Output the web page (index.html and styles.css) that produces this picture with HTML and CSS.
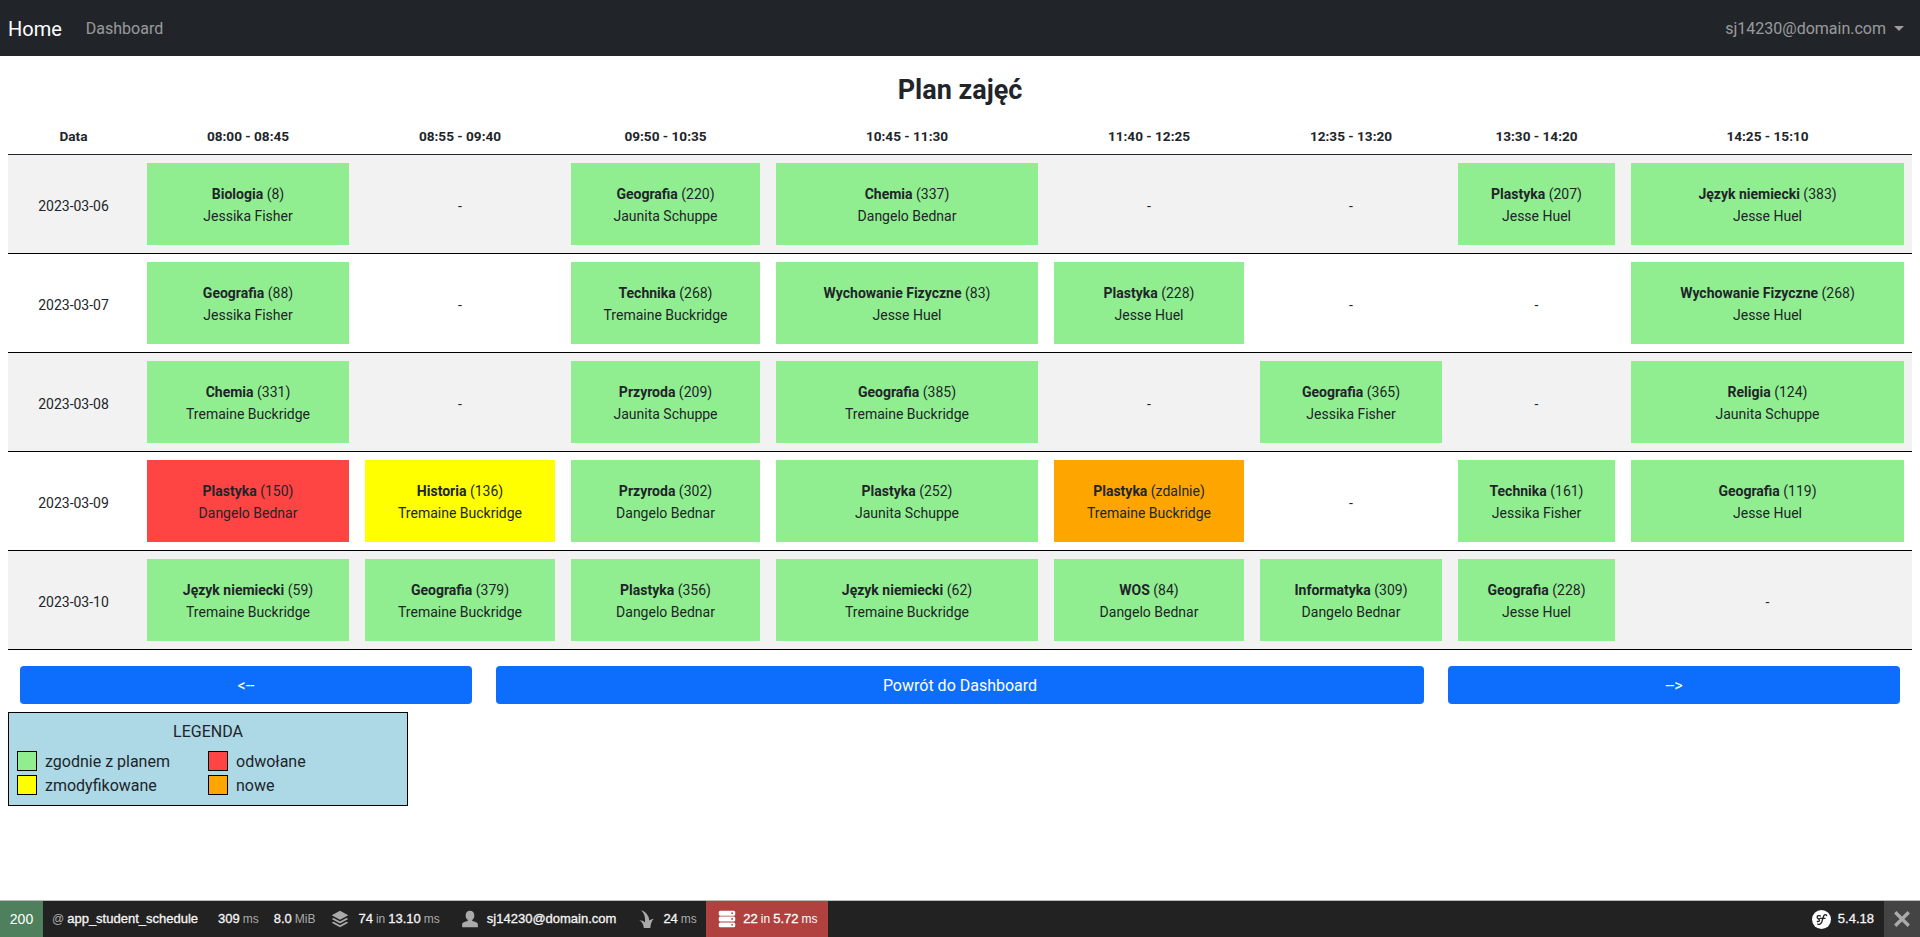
FILE: index.html
```html
<!DOCTYPE html>
<html lang="pl">
<head>
  <meta charset="UTF-8" />
  <meta name="viewport" content="width=device-width, initial-scale=1" />
  <title>Plan zajęć</title>
  <link rel="stylesheet" href="styles.css">
</head>
<body>

  <nav class="navbar">
    <a class="navbar-brand" href="#">Home</a>
    <a class="nav-link" href="#">Dashboard</a>
    <a class="nav-user" href="#">sj14230@domain.com<span class="caret"></span></a>
  </nav>

  <main class="content">
    <h3 class="page-title">Plan zajęć</h3>

    <table class="schedule">
      <colgroup>
        <col class="col-date">
        <col class="col-1">
        <col class="col-2">
        <col class="col-3">
        <col class="col-4">
        <col class="col-5">
        <col class="col-6">
        <col class="col-7">
        <col class="col-8">
      </colgroup>
      <thead>
        <tr>
          <th>Data</th>
          <th>08:00 - 08:45</th>
          <th>08:55 - 09:40</th>
          <th>09:50 - 10:35</th>
          <th>10:45 - 11:30</th>
          <th>11:40 - 12:25</th>
          <th>12:35 - 13:20</th>
          <th>13:30 - 14:20</th>
          <th>14:25 - 15:10</th>
        </tr>
      </thead>
      <tbody>
        <tr class="odd">
          <td class="plain">2023-03-06</td>
          <td><div class="lesson plan"><b>Biologia</b> (8)<br>Jessika Fisher</div></td>
          <td class="plain">-</td>
          <td><div class="lesson plan"><b>Geografia</b> (220)<br>Jaunita Schuppe</div></td>
          <td><div class="lesson plan"><b>Chemia</b> (337)<br>Dangelo Bednar</div></td>
          <td class="plain">-</td>
          <td class="plain">-</td>
          <td><div class="lesson plan"><b>Plastyka</b> (207)<br>Jesse Huel</div></td>
          <td><div class="lesson plan"><b>Język niemiecki</b> (383)<br>Jesse Huel</div></td>
        </tr>
        <tr>
          <td class="plain">2023-03-07</td>
          <td><div class="lesson plan"><b>Geografia</b> (88)<br>Jessika Fisher</div></td>
          <td class="plain">-</td>
          <td><div class="lesson plan"><b>Technika</b> (268)<br>Tremaine Buckridge</div></td>
          <td><div class="lesson plan"><b>Wychowanie Fizyczne</b> (83)<br>Jesse Huel</div></td>
          <td><div class="lesson plan"><b>Plastyka</b> (228)<br>Jesse Huel</div></td>
          <td class="plain">-</td>
          <td class="plain">-</td>
          <td><div class="lesson plan"><b>Wychowanie Fizyczne</b> (268)<br>Jesse Huel</div></td>
        </tr>
        <tr class="odd">
          <td class="plain">2023-03-08</td>
          <td><div class="lesson plan"><b>Chemia</b> (331)<br>Tremaine Buckridge</div></td>
          <td class="plain">-</td>
          <td><div class="lesson plan"><b>Przyroda</b> (209)<br>Jaunita Schuppe</div></td>
          <td><div class="lesson plan"><b>Geografia</b> (385)<br>Tremaine Buckridge</div></td>
          <td class="plain">-</td>
          <td><div class="lesson plan"><b>Geografia</b> (365)<br>Jessika Fisher</div></td>
          <td class="plain">-</td>
          <td><div class="lesson plan"><b>Religia</b> (124)<br>Jaunita Schuppe</div></td>
        </tr>
        <tr>
          <td class="plain">2023-03-09</td>
          <td><div class="lesson cancelled"><b>Plastyka</b> (150)<br>Dangelo Bednar</div></td>
          <td><div class="lesson modified"><b>Historia</b> (136)<br>Tremaine Buckridge</div></td>
          <td><div class="lesson plan"><b>Przyroda</b> (302)<br>Dangelo Bednar</div></td>
          <td><div class="lesson plan"><b>Plastyka</b> (252)<br>Jaunita Schuppe</div></td>
          <td><div class="lesson new"><b>Plastyka</b> (zdalnie)<br>Tremaine Buckridge</div></td>
          <td class="plain">-</td>
          <td><div class="lesson plan"><b>Technika</b> (161)<br>Jessika Fisher</div></td>
          <td><div class="lesson plan"><b>Geografia</b> (119)<br>Jesse Huel</div></td>
        </tr>
        <tr class="odd">
          <td class="plain">2023-03-10</td>
          <td><div class="lesson plan"><b>Język niemiecki</b> (59)<br>Tremaine Buckridge</div></td>
          <td><div class="lesson plan"><b>Geografia</b> (379)<br>Tremaine Buckridge</div></td>
          <td><div class="lesson plan"><b>Plastyka</b> (356)<br>Dangelo Bednar</div></td>
          <td><div class="lesson plan"><b>Język niemiecki</b> (62)<br>Tremaine Buckridge</div></td>
          <td><div class="lesson plan"><b>WOS</b> (84)<br>Dangelo Bednar</div></td>
          <td><div class="lesson plan"><b>Informatyka</b> (309)<br>Dangelo Bednar</div></td>
          <td><div class="lesson plan"><b>Geografia</b> (228)<br>Jesse Huel</div></td>
          <td class="plain">-</td>
        </tr>
      </tbody>
    </table>

    <div class="actions">
      <a class="btn" href="#">&lt;--</a>
      <a class="btn" href="#">Powrót do Dashboard</a>
      <a class="btn" href="#">--&gt;</a>
    </div>

    <div class="legend">
      <div class="legend-title">LEGENDA</div>
      <div class="legend-items">
        <div class="legend-item"><span class="swatch plan"></span>zgodnie z planem</div>
        <div class="legend-item"><span class="swatch cancelled"></span>odwołane</div>
        <div class="legend-item"><span class="swatch modified"></span>zmodyfikowane</div>
        <div class="legend-item"><span class="swatch new"></span>nowe</div>
      </div>
    </div>
  </main>

  <!-- pasek debug -->
  <div class="toolbar">
    <div class="tb-status">200</div>
    <div class="tb-block tb-route"><span class="tb-label">@</span><span class="tb-value">app_student_schedule</span></div>
    <div class="tb-block tb-time"><span class="tb-value">309</span><span class="tb-label">ms</span></div>
    <div class="tb-block tb-memory"><span class="tb-value">8.0</span><span class="tb-label">MiB</span></div>
    <div class="tb-block tb-cache">
      <svg class="tb-icon" viewBox="0 0 24 24"><path fill="#aaa" d="M12 1 23 7 12 13 1 7zM3.5 10.7 1 12l11 6 11-6-2.5-1.3L12 15.3zM3.5 15.7 1 17l11 6 11-6-2.5-1.3L12 20.3z"/></svg>
      <span class="tb-value">74</span><span class="tb-label">in</span><span class="tb-value">13.10</span><span class="tb-label">ms</span>
    </div>
    <div class="tb-block tb-user">
      <svg class="tb-icon" viewBox="0 0 24 24"><path fill="#aaa" d="M12 1c3.6 0 5.8 2.8 5.8 6.2 0 2.6-1.2 4.8-2.8 5.8v1.500c3 .6 7.5 2 7.5 4.500V23h-21v-4c0-2.500 4.500-3.900 7.500-4.500V13C7.400 12 6.200 9.800 6.200 7.200 6.200 3.800 8.400 1 12 1z"/></svg>
      <span class="tb-value">sj14230@domain.com</span>
    </div>
    <div class="tb-block tb-twig">
      <svg class="tb-icon" viewBox="0 0 18 18"><path fill="#aaa" d="M3.3.3C7 1.5 11 5 11.3 10.500 12.3 10 14 9 15.8 8.800 14 10.500 12.800 13.500 12.300 18H5.800C5.500 14.500 4 11.800 1.300 10.300 3.500 10.300 5.500 11 7 12.500 7.500 8 6.500 3.500 3.300.3z"/></svg>
      <span class="tb-value">24</span><span class="tb-label">ms</span>
    </div>
    <div class="tb-block tb-db">
      <svg class="tb-icon" viewBox="0 0 24 24"><path fill="#fff" fill-rule="evenodd" d="M3 1h18a2 2 0 0 1 2 2v2.500a2 2 0 0 1-2 2H3a2 2 0 0 1-2-2V3a2 2 0 0 1 2-2zm15.800 2a1.200 1.200 0 1 0 0 2.400 1.200 1.200 0 0 0 0-2.400zM3 8.800h18a2 2 0 0 1 2 2v2.400a2 2 0 0 1-2 2H3a2 2 0 0 1-2-2v-2.400a2 2 0 0 1 2-2zm15.800 2a1.200 1.200 0 1 0 0 2.400 1.200 1.200 0 0 0 0-2.400zM3 16.500h18a2 2 0 0 1 2 2V21a2 2 0 0 1-2 2H3a2 2 0 0 1-2-2v-2.500a2 2 0 0 1 2-2zm15.800 2a1.200 1.200 0 1 0 0 2.400 1.200 1.200 0 0 0 0-2.400z"/></svg>
      <span class="tb-value">22</span><span class="tb-label">in</span><span class="tb-value">5.72</span><span class="tb-label">ms</span>
    </div>
    <div class="tb-block tb-version">
      <svg class="tb-sf" viewBox="0 0 24 24"><circle cx="12" cy="12" r="12" fill="#fff"/><path fill="none" stroke="#222" stroke-width="1.700" stroke-linecap="round" d="M18.500 7c-.2-1.600-2.500-1.600-3.500 0-1.200 2-1.600 6-2.800 8.500-.9 2-3 3.200-5 2.300M10 10.500h6.500M10.500 7.500c-2-1-4-.2-4 1.500 0 1.600 3 2.200 3 4 0 1-1 1.800-2.800 1.500"/></svg>
      <span class="tb-value">5.4.18</span>
    </div>
    <div class="tb-close">
      <svg viewBox="0 0 24 24" class="tb-x"><path fill="none" stroke="#aaa" stroke-width="4.500" d="M3 3l18 18M21 3 3 21"/></svg>
    </div>
  </div>

</body>
</html>
```

FILE: styles.css
```css
* {
  box-sizing: border-box;
}
body {
  margin: 0;
  font-family: Roboto, "Noto Sans", sans-serif;
  font-size: 16px;
  line-height: 1.5;
  color: #212529;
  background: #fff;
}

/* Navbar */
.navbar {
  display: flex;
  align-items: center;
  height: 56px;
  padding: 0 8px;
  background: #212529;
}
.navbar a {
  text-decoration: none;
  padding-top: 2px;
}
.navbar-brand {
  font-size: 20px;
  color: #fff;
  margin-right: 16px;
}
.nav-link {
  padding-left: 8px;
  padding-right: 8px;
  color: rgba(255,255,255,0.55);
}
.nav-user {
  margin-left: auto;
  padding-right: 8px;
  color: rgba(255,255,255,0.55);
}
.caret {
  display: inline-block;
  margin-left: 8px;
  vertical-align: 3px;
  border-top: 5px solid rgba(255,255,255,0.55);
  border-left: 5px solid transparent;
  border-right: 5px solid transparent;
}

/* Plan */
.content {
  padding: 0 8px;
}
.page-title {
  margin: 17px 0 11px;
  font-size: 27px;
  font-weight: 700;
  line-height: 34px;
  text-align: center;
}
.schedule {
  width: 100%;
  table-layout: fixed;
  border-collapse: collapse;
  font-size: 14px;
  text-align: center;
}
.col-date { width: 131px; }
.col-1 { width: 218px; }
.col-2 { width: 206px; }
.col-3 { width: 205px; }
.col-4 { width: 278px; }
.col-5 { width: 206px; }
.col-6 { width: 198px; }
.col-7 { width: 173px; }
.col-8 { width: 289px; }
.schedule th {
  padding: 8px;
  font-size: 13.6px;
  border-bottom: 1px solid #212529;
}
.schedule td {
  padding: 8px;
  vertical-align: middle;
  border-bottom: 1px solid #000;
}
.schedule td.plain {
  padding-top: 12px;
}
.schedule tr.odd td {
  background: #f2f2f2;
}
.lesson {
  height: 82px;
  padding: 20px 4px;
  line-height: 22px;
}
.plan { background: #90ee90; }
.cancelled { background: #ff4444; }
.modified { background: #ffff00; }
.new { background: #ffa500; }

/* Przyciski */
.actions {
  display: grid;
  grid-template-columns: 1fr 2fr 1fr;
  margin-top: 16px;
}
.btn {
  margin: 0 12px;
  height: 38px;
  line-height: 40px;
  text-align: center;
  color: #fff;
  background: #0d6efd;
  border-radius: 4px;
  text-decoration: none;
}

/* Legenda */
.legend {
  width: 400px;
  height: 94px;
  margin-top: 8px;
  padding: 7px 8px;
  background: #add8e6;
  border: 1px solid #000;
}
.legend-title {
  text-align: center;
}
.legend-items {
  display: grid;
  grid-template-columns: 1fr 1fr;
  row-gap: 4px;
  margin-top: 7px;
}
.legend-item {
  display: flex;
  align-items: flex-start;
  height: 20px;
  line-height: 22px;
}
.swatch {
  width: 20px;
  height: 20px;
  margin-right: 8px;
  border: 1px solid #000;
}

/* Pasek debug */
.toolbar {
  position: fixed;
  left: 0;
  right: 0;
  bottom: 0;
  display: flex;
  align-items: center;
  height: 37px;
  border-top: 1px solid #bbb;
  background: #222;
  font-family: "Liberation Sans", Arial, sans-serif;
  font-size: 13px;
  color: #f5f5f5;
}
.tb-status {
  width: 43px;
  height: 36px;
  line-height: 36px;
  text-align: center;
  font-size: 14px;
  background: #4f805d;
  color: #fff;
}
.tb-block {
  display: flex;
  align-items: center;
  gap: 3px;
  height: 36px;
  white-space: pre;
}
.tb-label {
  color: #aaa;
  font-size: 12px;
}
.tb-value {
  color: #f5f5f5;
  -webkit-text-stroke: 0.3px;
}
.tb-icon {
  width: 18px;
  height: 18px;
  margin-right: 6px;
}
.tb-route { margin-left: 9px; }
.tb-time { margin-left: 20px; }
.tb-memory { margin-left: 15px; }
.tb-cache { margin-left: 16px; }
.tb-user { margin-left: 21px; }
.tb-user .tb-icon { margin-right: 5px; }
.tb-twig { margin-left: 22px; }
.tb-twig .tb-icon { margin-right: 4px; }
.tb-db {
  width: 122px;
  margin-left: 9.5px;
  padding: 0 0 0 12px;
  background: #b0413e;
}
.tb-db .tb-icon { margin-right: 4px; }
.tb-db .tb-label,
.tb-db .tb-value {
  color: #fff;
}
.tb-version {
  margin-left: auto;
  margin-right: 10px;
}
.tb-sf {
  width: 19px;
  height: 19px;
  margin-right: 4px;
}
.tb-close {
  display: flex;
  align-items: center;
  justify-content: center;
  width: 36px;
  height: 36px;
  background: #444;
}
.tb-x {
  width: 18px;
  height: 18px;
}
```
